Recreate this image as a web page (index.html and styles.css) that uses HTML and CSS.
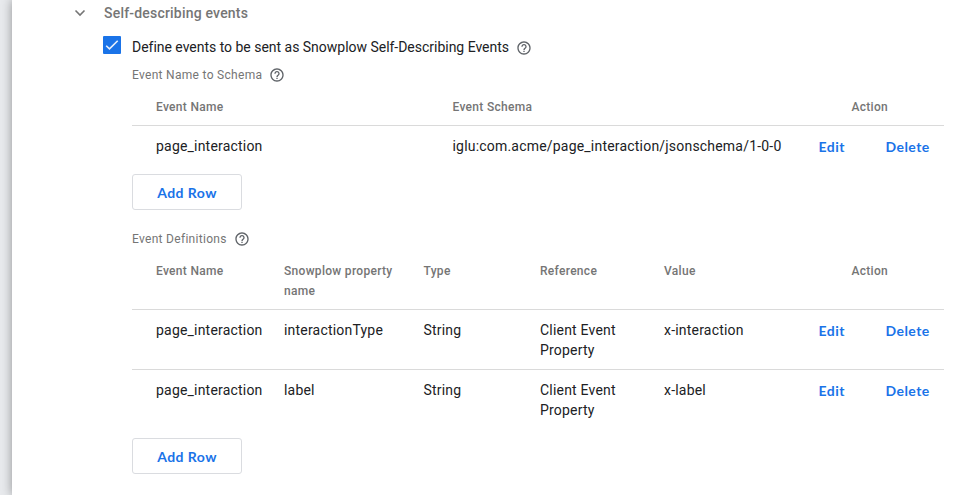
FILE: index.html
```html
<!DOCTYPE html>
<html lang="en">
<head>
<meta charset="utf-8">
<title>Self-describing events</title>
<link rel="stylesheet" href="styles.css">
</head>
<body>
<svg class="defs" width="0" height="0"><symbol id="help" viewBox="0 0 24 24"><path fill="currentColor" d="M11 18h2v-2h-2v2zm1-16C6.480 2 2 6.480 2 12s4.480 10 10 10 10-4.480 10-10S17.520 2 12 2zm0 18c-4.410 0-8-3.590-8-8s3.590-8 8-8 8 3.590 8 8-3.590 8-8 8zm0-14c-2.210 0-4 1.790-4 4h2c0-1.100.9-2 2-2s2 .9 2 2c0 2-3 1.750-3 5h2c0-2.250 3-2.500 3-5 0-2.210-1.790-4-4-4z"/></symbol></svg>
<main class="sheet">
  <header class="section-head">
    <svg class="chevron" viewBox="0 0 12 8"><path d="M1.500 1.500L6 6l4.500-4.500"/></svg>
    <h2>Self-describing events</h2>
  </header>
  <div class="option">
    <span class="checkbox"><svg viewBox="0 0 18 18"><path d="M3.200 9.700l3.300 3.200 8.200-8.100"/></svg></span>
    <span class="option-label">Define events to be sent as Snowplow Self-Describing Events</span>
    <svg class="help low"><use href="#help"/></svg>
  </div>
  <section class="group">
    <div class="label"><span>Event Name to Schema</span><svg class="help"><use href="#help"/></svg></div>
    <div class="table schema">
      <div class="row head"><span>Event Name</span><span>Event Schema</span><span class="action">Action</span></div>
      <div class="row"><span>page_interaction</span><span>iglu:com.acme/page_interaction/jsonschema/1-0-0</span><a>Edit</a><a>Delete</a></div>
    </div>
    <button>Add Row</button>
  </section>
  <section class="group second">
    <div class="label"><span>Event Definitions</span><svg class="help"><use href="#help"/></svg></div>
    <div class="table definitions">
      <div class="row head"><span>Event Name</span><span>Snowplow property name</span><span>Type</span><span>Reference</span><span>Value</span><span class="action">Action</span></div>
      <div class="row"><span>page_interaction</span><span>interactionType</span><span>String</span><span>Client Event Property</span><span>x-interaction</span><a>Edit</a><a>Delete</a></div>
      <div class="row"><span>page_interaction</span><span>label</span><span>String</span><span>Client Event Property</span><span>x-label</span><a>Edit</a><a>Delete</a></div>
    </div>
    <button>Add Row</button>
  </section>
</main>
</body>
</html>
```
FILE: styles.css
```css
* { box-sizing: border-box; }
body { margin: 0; height: 495px; overflow: hidden; background: #e8eaed; font: 14px/20px Roboto, sans-serif; color: #202124; padding-left: 12px; }
.defs { display: block; height: 0; }
.sheet { height: 495px; background: #fff; padding: 3px 14px 0 62px; box-shadow: 0 0 10px rgba(0,0,0,.38); }
.section-head { display: flex; align-items: center; height: 20px; }
.chevron { width: 12px; height: 8px; margin-right: 18px; margin-top: -1px; fill: none; stroke: #757575; stroke-width: 1.600; }
h2 { margin: 0; font-size: 14px; line-height: 20px; font-weight: 500; color: #757575; letter-spacing: .2px; }
.option { display: flex; align-items: center; height: 20px; margin: 14px 0 0 29px; }
.checkbox { width: 18px; height: 18px; margin-top: -4px; border-radius: 1px; background: #1a73e8; }
.checkbox svg { display: block; fill: none; stroke: #e8f0fc; stroke-width: 1.600; }
.option-label { margin-left: 11px; letter-spacing: -.02px; }
.help { width: 16px; height: 16px; color: #5f6368; margin-left: 7px; }
.low { margin-top: 2px; }
.group { margin: 10px 0 0 58px; }
.label { display: flex; align-items: center; height: 16px; font-size: 12px; color: #757575; letter-spacing: .3px; }
.table { margin-top: 1px; }
.row { display: grid; border-bottom: 1px solid #dadada; min-height: 60px; padding: 10px 0 9px 24px; letter-spacing: .2px; }
.row:last-child { border: 0; }
.schema .row { grid-template-columns: 296.500px 366px 67px 1fr; min-height: 48px; }
.schema .head { min-height: 42px; padding-top: 13px; padding-bottom: 8px; }
.definitions { margin-bottom: 8px; }
.definitions .row { grid-template-columns: 128px 139.500px 116.500px 124px 154.500px 67px 1fr; }
.row.head { font-size: 12px; font-weight: 500; color: #757575; letter-spacing: .3px; }
.definitions .head { padding-top: 13px; padding-bottom: 8px; }
.action { grid-column: -3 / -1; padding-left: 33px; }
a, button { font-family: "Google Sans", Lato, sans-serif; font-weight: 700; color: #1a73e8; letter-spacing: .45px; }
a { margin-top: 1px; }
button { display: block; width: 110px; height: 36px; background: #fff; border: 1px solid #dadce0; border-radius: 3px; font-size: 14px; padding: 0; }
.second { margin-top: 21px; }
```
